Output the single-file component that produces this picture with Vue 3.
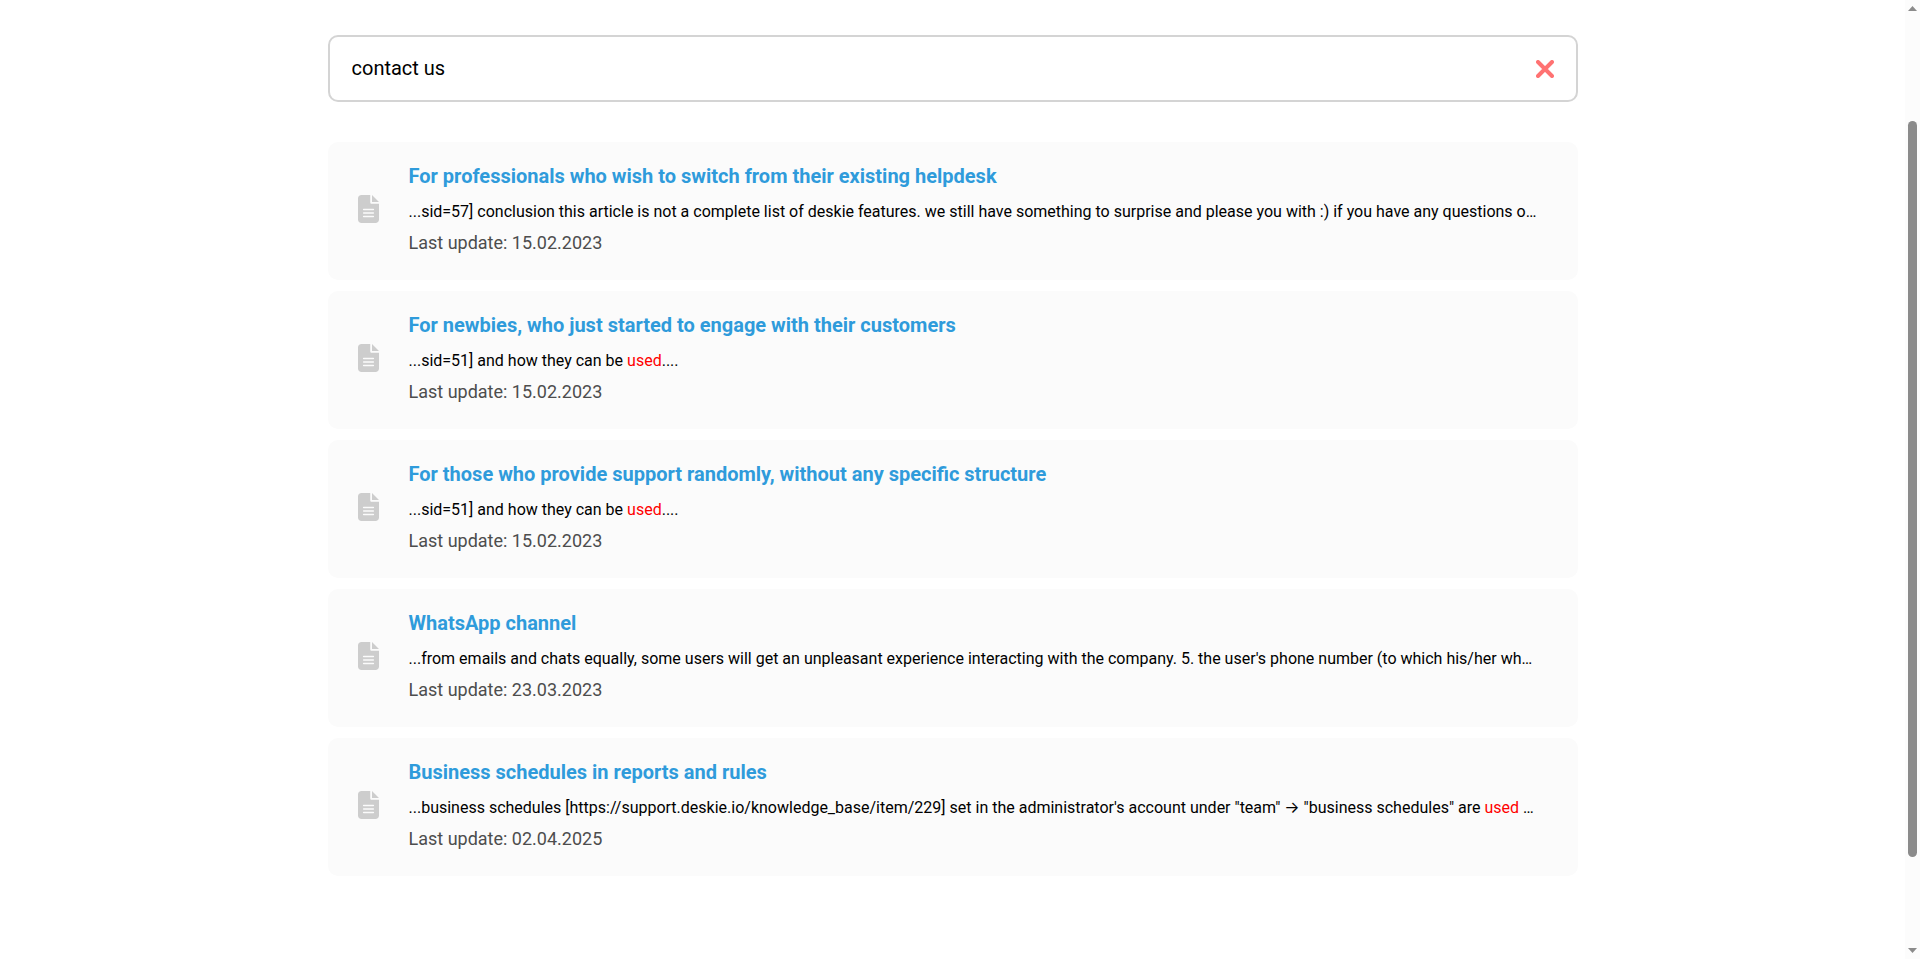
<script setup>
import { ref } from "vue"

const query = ref("contact us")

const articles = [
  {
    title: "For professionals who wish to switch from their existing helpdesk",
    before: "...sid=57] conclusion this article is not a complete list of deskie features. we still have something to surprise and please you with :) if you have any questions o…",
    updated: "15.02.2023",
  },
  {
    title: "For newbies, who just started to engage with their customers",
    before: "...sid=51] and how they can be ",
    match: "used",
    after: "....",
    updated: "15.02.2023",
  },
  {
    title: "For those who provide support randomly, without any specific structure",
    before: "...sid=51] and how they can be ",
    match: "used",
    after: "....",
    updated: "15.02.2023",
  },
  {
    title: "WhatsApp channel",
    before: "...from emails and chats equally, some users will get an unpleasant experience interacting with the company. 5. the user's phone number (to which his/her wh…",
    updated: "23.03.2023",
  },
  {
    title: "Business schedules in reports and rules",
    before: "...business schedules [https://support.deskie.io/knowledge_base/item/229] set in the administrator's account under \"team\" → \"business schedules\" are ",
    match: "used",
    after: " …",
    updated: "02.04.2025",
  },
]

const clearQuery = () => {
  query.value = ""
}
</script>

<template>
  <div class="page">
    <main class="content">
      <form class="search" role="search" @submit.prevent>
        <input v-model="query" class="search-input" type="text" aria-label="Search" />
        <button class="search-clear" type="button" aria-label="Clear" @click="clearQuery">
          <svg width="18" height="18" viewBox="0 0 18 18">
            <path d="M2 2L16 16M16 2L2 16" fill="none" stroke="#ff7272" stroke-width="4" stroke-linecap="round" />
          </svg>
        </button>
      </form>

      <ul class="results">
        <li v-for="article in articles" :key="article.title" class="result">
          <svg class="result-icon" width="21" height="28" viewBox="0 0 384 512">
            <path
              fill="#cdcdcd"
              d="M224 136V0H64C28 0 0 28 0 64v384c0 36 28 64 64 64h256c36 0 64-28 64-64V160H248c-13 0-24-11-24-24zM384 128H256V0z"
            />
            <path d="M104 266H280M104 330H280M104 394H280" stroke="#fbfbfb" stroke-width="30" stroke-linecap="round" />
          </svg>
          <div class="result-body">
            <a class="result-title" href="#">{{ article.title }}</a>
            <p class="result-text">{{ article.before }}<span v-if="article.match" class="match">{{ article.match }}</span>{{ article.after }}</p>
            <p class="result-date">Last update: {{ article.updated }}</p>
          </div>
        </li>
      </ul>
    </main>

    <div class="scrollbar" aria-hidden="true">
      <svg class="scroll-arrow" width="9" height="5" viewBox="0 0 9 5">
        <path d="M0 5L4.500 0L9 5z" fill="#8b8b8b" />
      </svg>
      <div class="scroll-track">
        <div class="scroll-before"></div>
        <div class="scroll-thumb"></div>
        <div class="scroll-after"></div>
      </div>
      <svg class="scroll-arrow" width="9" height="5" viewBox="0 0 9 5">
        <path d="M0 0H9L4.500 5z" fill="#8b8b8b" />
      </svg>
    </div>
  </div>
</template>

<style>
body {
  margin: 0;
  background: #fff;
}
</style>

<style scoped>
* {
  box-sizing: border-box;
}

.page {
  display: flex;
  min-height: 100vh;
  font-family: Roboto, Inter, sans-serif;
  color: #000;
}

.content {
  flex: 1;
  min-width: 0;
  max-width: 1282px;
  margin: 0 auto;
  padding: 35px 16px 40px;
}

.search {
  display: flex;
  align-items: center;
  border: 2px solid #d4d4d4;
  border-radius: 10px;
}

.search-input {
  flex: 1;
  min-width: 0;
  height: 63px;
  padding: 0 22px 2px;
  border: 0;
  outline: 0;
  background: transparent;
  font-family: inherit;
  font-size: 20px;
  color: inherit;
}

.search-clear {
  display: flex;
  padding: 8px;
  margin-right: 14px;
  border: 0;
  background: transparent;
  cursor: pointer;
}

.results {
  display: flex;
  flex-direction: column;
  gap: 11px;
  margin: 40px 0 0;
  padding: 0;
  list-style: none;
}

.result {
  display: flex;
  align-items: center;
  gap: 30px;
  padding: 22px 24px 26px 30px;
  border-radius: 10px;
  background: #fbfbfb;
}

.result-icon {
  flex: none;
}

.result-body {
  flex: 1;
  min-width: 0;
}

.result-title {
  display: block;
  font-size: 20px;
  font-weight: 700;
  line-height: 24px;
  color: #2f9bdb;
  text-decoration: none;
}

.result-text {
  margin: 12px 0 8px;
  overflow: hidden;
  font-size: 16px;
  line-height: 24px;
  white-space: nowrap;
}

.match {
  color: #f00;
}

.result-date {
  margin: 0;
  font-size: 18px;
  line-height: 22px;
  color: #4d4d4d;
}

.scrollbar {
  display: flex;
  flex: none;
  flex-direction: column;
  align-items: center;
  width: 15px;
  padding: 6px 0;
  background: #fcfcfc;
}

.scroll-arrow {
  flex: none;
}

.scroll-track {
  display: flex;
  flex: 1;
  flex-direction: column;
  width: 9px;
}

.scroll-before {
  flex: 110;
}

.scroll-thumb {
  flex: 736;
  border-radius: 5px;
  background: #8b8b8b;
}

.scroll-after {
  flex: 91;
}
</style>
